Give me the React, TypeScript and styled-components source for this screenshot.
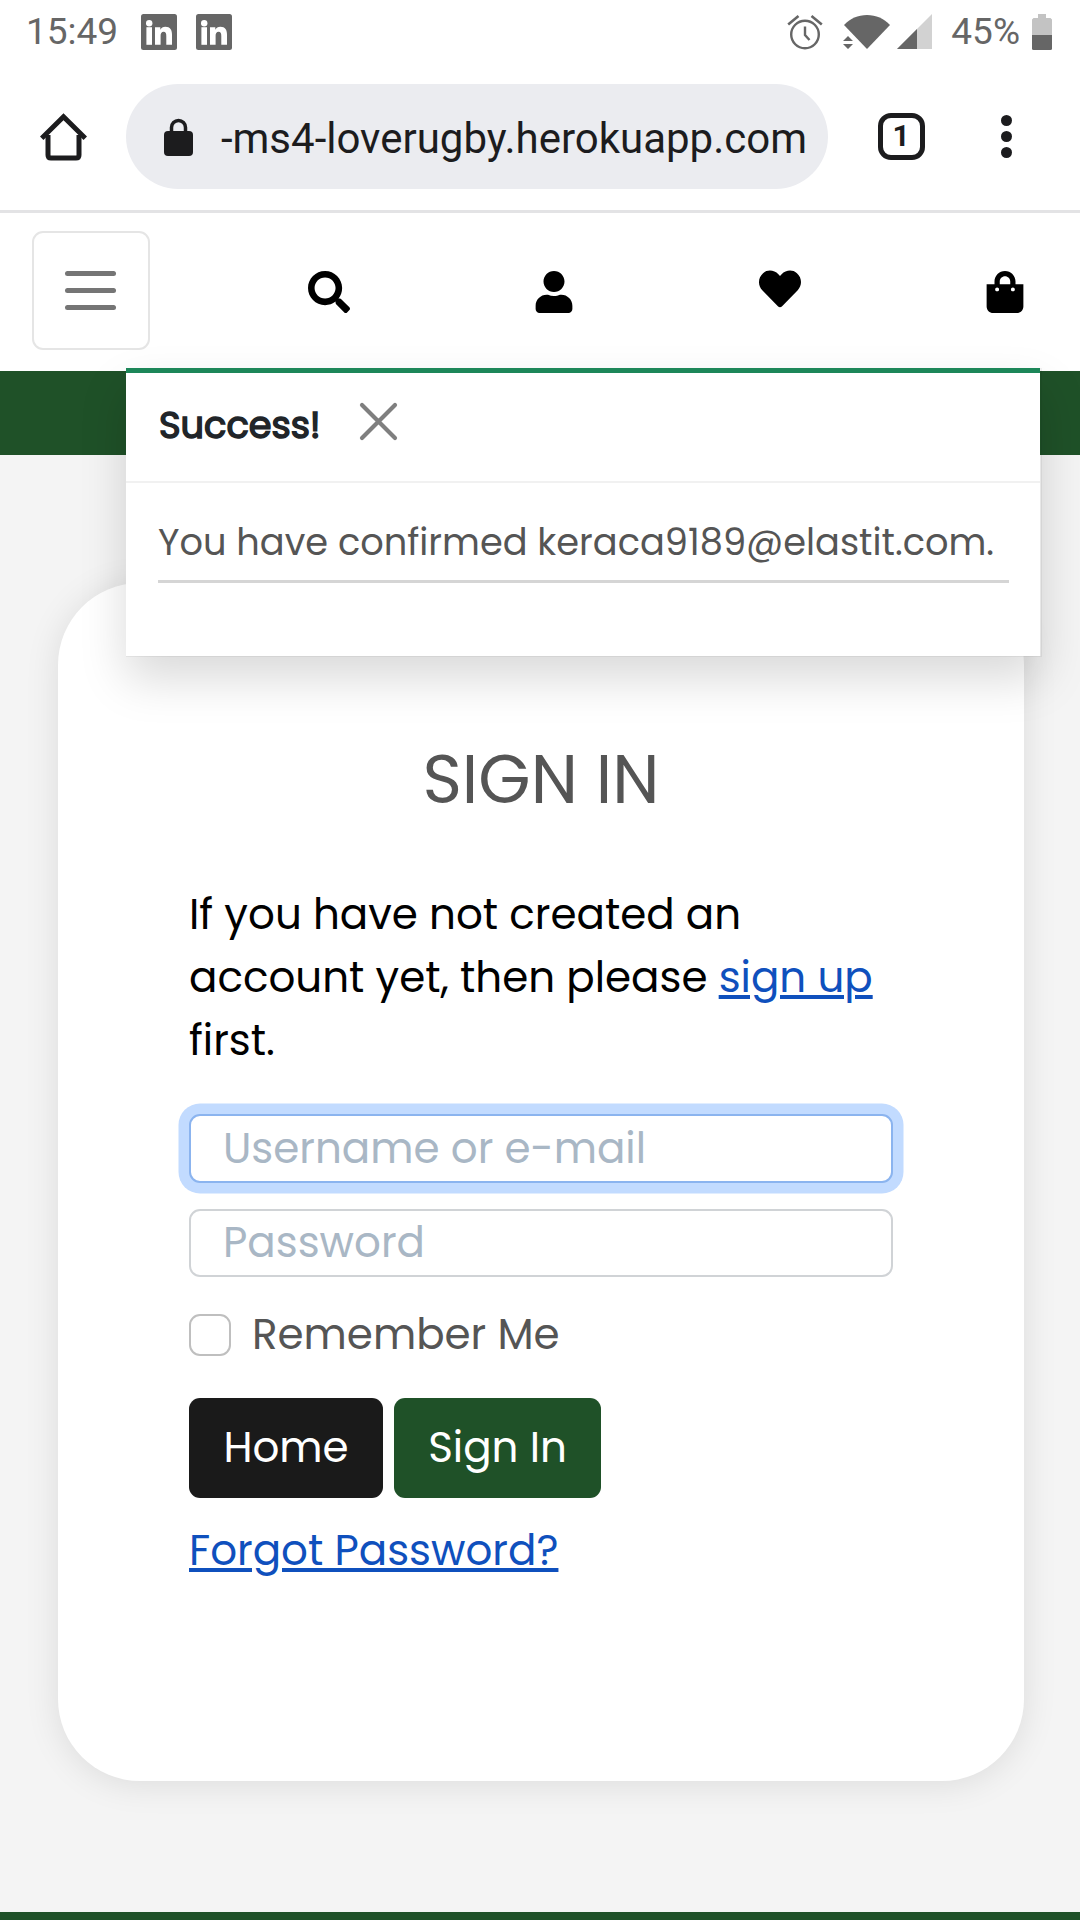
import React from "react";
import styled, { createGlobalStyle } from "styled-components";
import { FaSearch, FaUser, FaHeart, FaShoppingBag } from "react-icons/fa";

const GlobalStyle = createGlobalStyle`
  *, *::before, *::after { box-sizing: border-box; }
  body { margin: 0; background: #f4f4f4; }
`;

const Screen = styled.div`
  position: relative;
  display: flex;
  flex-direction: column;
  width: 1080px;
  height: 1920px;
  overflow: hidden;
  background: #f4f4f4;
  color: #555;
  font-family: Poppins, Inter, "Open Sans", sans-serif;
`;

/* ---------- phone status bar ---------- */

const StatusBar = styled.div`
  display: flex;
  align-items: center;
  height: 63px;
  padding: 0 28px 0 26px;
  background: #fff;
  color: #666;
  font-family: Roboto, "Liberation Sans", sans-serif;
  font-size: 37px;
  line-height: 62px;
`;

const Notifications = styled.div`
  display: flex;
  gap: 19px;
  margin: 0 auto 0 23px;
`;

const StatusIcons = styled.div`
  display: flex;
  align-items: center;
`;

const Percent = styled.span`
  margin: 0 12px 0 19px;
`;

/* ---------- browser toolbar ---------- */

const BrowserBar = styled.div`
  display: flex;
  align-items: center;
  height: 150px;
  padding: 0 68px 0 40px;
  border-bottom: 3px solid #e3e3e5;
  background: #fff;
  color: #1c1c1e;
  font-family: Roboto, "Liberation Sans", sans-serif;
`;

const AddressPill = styled.div`
  display: flex;
  align-items: center;
  width: 702px;
  height: 105px;
  margin: 0 50px 0 39px;
  padding: 0 21px 0 38px;
  border-radius: 53px;
  background: #ebecf0;
`;

const Address = styled.span`
  flex: 1;
  padding-top: 5px;
  font-size: 42px;
  line-height: 50px;
  text-align: right;
  white-space: nowrap;
`;

const TabCount = styled.div`
  display: flex;
  align-items: center;
  justify-content: center;
  width: 47px;
  height: 47px;
  padding: 0 1px 1px 0;
  border: 5px solid #1c1c1e;
  border-radius: 13px;
  font-size: 30px;
  font-weight: 700;
  line-height: 36px;
`;

const MenuDots = styled.div`
  display: flex;
  flex-direction: column;
  gap: 5px;
  margin-left: auto;
`;

const Dot = styled.span`
  width: 11px;
  height: 11px;
  border-radius: 50%;
  background: #1c1c1e;
`;

/* ---------- site header ---------- */

const SiteNav = styled.nav`
  display: flex;
  align-items: center;
  height: 158px;
  padding: 0 54px 0 32px;
  background: #fff;
`;

const Toggler = styled.button`
  display: flex;
  flex-direction: column;
  align-items: center;
  justify-content: center;
  gap: 12px;
  width: 118px;
  height: 119px;
  margin: 0 158px 3px 0;
  padding: 0 1px 0 0;
  border: 2px solid #e5e5e5;
  border-radius: 11px;
  background: #fff;
`;

const TogglerLine = styled.span`
  width: 51px;
  height: 5px;
  border-radius: 3px;
  background: #757575;
`;

const NavIcons = styled.div`
  display: flex;
  flex: 1;
  align-items: flex-start;
  justify-content: space-between;
  color: #000;
  font-size: 42px;

  svg { display: block; }
`;

const WishlistIcon = styled(FaHeart)`
  margin-top: -3px;
`;

const Banner = styled.div`
  height: 84px;
  background: #1f5128;
`;

/* ---------- toast ---------- */

const Toast = styled.section`
  position: absolute;
  top: 368px;
  left: 126px;
  width: 916px;
  height: 289px;
  border: solid rgba(0, 0, 0, 0.05);
  border-width: 0 2px 1px 0;
  background: #fff;
  background-clip: padding-box;
  box-shadow: 0 22px 44px rgba(0, 0, 0, 0.15);
`;

const ToastHeader = styled.header`
  display: flex;
  align-items: center;
  height: 115px;
  padding: 0 0 11px 33px;
  border-top: 5px solid #1d8759;
  border-bottom: 2px solid #f1f1f1;
`;

const ToastTitle = styled.strong`
  padding-top: 7px;
  width: 200px;
  color: #212529;
  font-size: 36.75px;
  font-weight: 400;
  line-height: 54px;
  -webkit-text-stroke: 1.5px #212529;
`;

const ToastText = styled.p`
  margin: 31px 31px 0 32px;
  height: 69px;
  border-bottom: 3px solid #d5d5d5;
  font-size: 36.75px;
  line-height: 57px;
  white-space: nowrap;
`;

/* ---------- sign in card ---------- */

const Card = styled.main`
  width: 966px;
  height: 1198px;
  margin: 128px 0 0 58px;
  padding: 164px 131px 0;
  border-radius: 82px;
  background: #fff;
  box-shadow: 0 3px 34px rgba(0, 0, 0, 0.1);
`;

const Title = styled.h1`
  margin: 0 0 70px;
  font-size: 67.2px;
  font-weight: 400;
  line-height: 66px;
  text-align: center;
`;

const Intro = styled.p`
  margin: 0 0 42px;
  color: #000;
  font-size: 42px;
  line-height: 63px;
  white-space: nowrap;
`;

const Link = styled.a`
  color: #0f50bd;
  font-size: 42px;
  line-height: 62px;
  text-decoration: underline;
  text-decoration-thickness: 4px;
  text-underline-offset: 3px;
`;

const Field = styled.input<{ $focused?: boolean }>`
  display: block;
  width: 704px;
  height: ${(p) => (p.$focused ? 69 : 68)}px;
  margin: 0 0 26px;
  padding: 0 32px 1px;
  border: 2px solid ${(p) => (p.$focused ? "#8bb4ef" : "#d0d3d6")};
  border-radius: 11px;
  outline: 0;
  background: #fff;
  box-shadow: ${(p) => (p.$focused ? "0 0 0 10.5px #c2dbff" : "none")};
  font: 400 42px/62px Poppins, Inter, "Open Sans", sans-serif;

  &::placeholder { color: #a9b7c5; opacity: 1; }
`;

const Remember = styled.label`
  display: flex;
  align-items: center;
  gap: 21px;
  height: 64px;
  font-size: 42px;
  line-height: 62px;
`;

const Checkbox = styled.input`
  appearance: none;
  width: 42px;
  height: 42px;
  margin: 0;
  border: 2px solid #bfbfbf;
  border-radius: 11px;
  background: #fff;
`;

const Actions = styled.div`
  display: flex;
  gap: 11px;
  margin: 31px 0 22px;
`;

const Button = styled.button<{ $bg: string; $width: number }>`
  width: ${(p) => p.$width}px;
  height: 100px;
  padding: 0 0 1px;
  border: 0;
  border-radius: 11px;
  background: ${(p) => p.$bg};
  color: #fff;
  font: 400 42px/62px Poppins, Inter, "Open Sans", sans-serif;
`;

const Footer = styled.footer`
  height: 8px;
  margin-top: auto;
  background: #1f5128;
`;

/* ---------- drawings ---------- */

const LinkedIn = () => (
  <svg width="36" height="36" viewBox="0 0 36 36">
    <rect width="36" height="36" rx="2.5" fill="#666" />
    <g fill="#fff">
      <circle cx="8.2" cy="9.3" r="3.2" />
      <rect x="5.4" y="13.2" width="5.6" height="17.600" />
      <path d="M14 13.200h5.300v2.600c1-1.800 2.700-3 5-3 5 0 6.700 3 6.700 8v10h-5.700v-8.800c0-2.400-.5-4.200-2.700-4.200s-3 1.800-3 4.100v8.900H14z" />
    </g>
  </svg>
);

const Alarm = () => (
  <svg width="36" height="36" viewBox="0 0 36 36" fill="none" stroke="#666" strokeWidth="2.4">
    <circle cx="18" cy="20.500" r="13.800" />
    <path d="M18 12.500v8.500l4.500 5" />
    <path d="M1.200 10.500 11.500 2M34.800 10.500 24.500 2" strokeWidth="2.600" />
  </svg>
);

const WifiSvg = styled.svg`
  margin-left: 20px;
`;

const Wifi = () => (
  <WifiSvg width="48" height="36" viewBox="0 0 48 36" fill="#666">
    <path d="M1 11C7 4.500 15 1 24 1s17 3.500 23 10L24 35z" />
    <path d="M-1 21.500H6l6 6.500v7H-1z" fill="#fff" />
    <path d="M0 27h10l-5-5zM0 30h10l-5 5z" />
  </WifiSvg>
);

const SignalSvg = styled.svg`
  margin-left: 6px;
`;

const Signal = () => (
  <SignalSvg width="35" height="36" viewBox="0 0 35 36">
    <path d="M35 0v35H0z" fill="#d2d2d2" />
    <path d="M20 15v20H0z" fill="#666" />
  </SignalSvg>
);

const Battery = () => (
  <svg width="20" height="36" viewBox="0 0 20 36">
    <path d="M6 0h8v4h4.500L20 5.500V22H0V5.500L1.500 4H6z" fill="#c3c3c3" />
    <path d="M0 21h20v13.500q0 1.500-1.500 1.500h-17Q0 36 0 34.500z" fill="#666" />
  </svg>
);

const HomeIcon = () => (
  <svg width="47" height="48" viewBox="0 0 47 48" fill="none" stroke="#1c1c1e" strokeWidth="5">
    <path d="M8 22v20q0 3 3 3h25q3 0 3-3V22" />
    <path d="M1.700 25.300 23.500 3.700l21.800 21.600" />
  </svg>
);

const LockIcon = () => (
  <svg width="29" height="38" viewBox="0 0 29 38">
    <path d="M7.500 15V9.500a7 7 0 0 1 14 0V15" fill="none" stroke="#1c1c1e" strokeWidth="3.500" />
    <rect y="13" width="29" height="25" rx="4" fill="#1c1c1e" />
  </svg>
);

const CloseIcon = () => (
  <svg width="39" height="39" viewBox="0 0 39 39" stroke="#7f7f7f" strokeWidth="4.200" strokeLinecap="round">
    <path d="M3 3l33 33M36 3 3 36" />
  </svg>
);

export default function App() {
  return (
    <>
      <GlobalStyle />
      <Screen>
        <StatusBar>
          <span>15:49</span>
          <Notifications>
            <LinkedIn />
            <LinkedIn />
          </Notifications>
          <StatusIcons>
            <Alarm />
            <Wifi />
            <Signal />
            <Percent>45%</Percent>
            <Battery />
          </StatusIcons>
        </StatusBar>

        <BrowserBar>
          <HomeIcon />
          <AddressPill>
            <LockIcon />
            <Address>-ms4-loverugby.herokuapp.com</Address>
          </AddressPill>
          <TabCount>1</TabCount>
          <MenuDots>
            <Dot />
            <Dot />
            <Dot />
          </MenuDots>
        </BrowserBar>

        <SiteNav>
          <Toggler aria-label="Menu">
            <TogglerLine />
            <TogglerLine />
            <TogglerLine />
          </Toggler>
          <NavIcons>
            <FaSearch />
            <FaUser />
            <WishlistIcon />
            <FaShoppingBag />
          </NavIcons>
        </SiteNav>
        <Banner />

        <Card>
          <Title>SIGN IN</Title>
          <Intro>
            If you have not created an
            <br />
            account yet, then please <Link>sign up</Link>
            <br />
            first.
          </Intro>
          <Field $focused placeholder="Username or e-mail" />
          <Field type="password" placeholder="Password" />
          <Remember>
            <Checkbox type="checkbox" />
            Remember Me
          </Remember>
          <Actions>
            <Button $bg="#1a1a1a" $width={194}>Home</Button>
            <Button $bg="#1f5128" $width={207}>Sign In</Button>
          </Actions>
          <Link>Forgot Password?</Link>
        </Card>
        <Footer />

        <Toast>
          <ToastHeader>
            <ToastTitle>Success!</ToastTitle>
            <CloseIcon />
          </ToastHeader>
          <ToastText>You have confirmed keraca9189@elastit.com.</ToastText>
        </Toast>
      </Screen>
    </>
  );
}
